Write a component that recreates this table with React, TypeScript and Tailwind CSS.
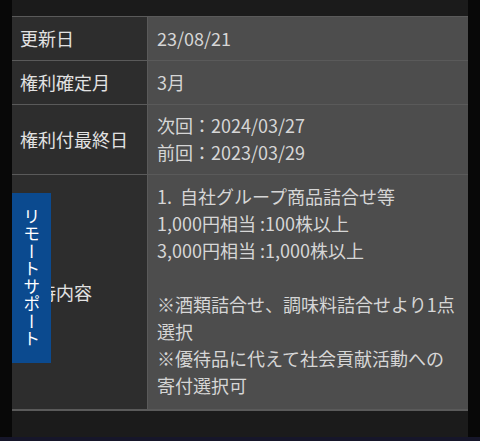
import React from "react"

const rows: { label: string; value: string[] }[] = [
  { label: "更新日", value: ["23/08/21"] },
  { label: "権利確定月", value: ["3月"] },
  { label: "権利付最終日", value: ["次回：2024/03/27", "前回：2023/03/29"] },
  {
    label: "優待内容",
    value: [
      "1.\u00a0\u00a0自社グループ商品詰合せ等",
      "1,000円相当 :100株以上",
      "3,000円相当 :1,000株以上",
      "",
      "※酒類詰合せ、調味料詰合せより1点選択",
      "※優待品に代えて社会貢献活動への寄付選択可",
    ],
  },
]

export default function App() {
  return (
    <div
      className="relative w-[480px] h-[441px] overflow-hidden bg-[#080808] flex flex-col"
      style={{ fontFamily: '"Noto Sans CJK JP", "Noto Sans", sans-serif' }}
    >
      <div className="flex-1 flex">
        <div className="w-[12px] bg-[#080808]" />
        <div className="w-[456px] bg-[#1b1b1b] flex flex-col pt-[16px]">
          <div className="border-t border-[#5a5a5a] border-b-2 border-b-[#5a5a5a]">
            {rows.map((row, i) => (
              <div key={i} className={"flex " + (i > 0 ? "border-t border-[#5a5a5a]" : "")}>
                <div className="w-[136px] shrink-0 bg-[#2d2d2d] border-r border-[#5a5a5a] flex items-center pl-[8px] text-[18px] leading-[27px] text-[#e2e2e2]">
                  {row.label}
                </div>
                <div className={"flex-1 bg-[#4d4d4d] pl-[9px] pr-[6px] text-[18px] leading-[27px] text-[#d6d6d6] " + (i === 3 ? "pt-[8px] pb-[10px]" : i === 2 ? "pt-[7px] pb-[8px]" : "py-[8px]")}>
                  {row.value.map((v, j) => (
                    <div key={j} className="min-h-[27px]">{v}</div>
                  ))}
                </div>
              </div>
            ))}
          </div>
        </div>
        <div className="w-[12px] bg-[#080808]" />
      </div>
      <div className="h-[4px] bg-[#16162a]" />
      <div
        className="absolute left-[12px] top-[193px] w-[39px] h-[170px] bg-[#0b4a8f] text-white text-[17px] tracking-[0.5px] flex items-center justify-center"
        style={{ writingMode: "vertical-rl", textOrientation: "upright" }}
      >
        リモートサポート
      </div>
    </div>
  )
}
